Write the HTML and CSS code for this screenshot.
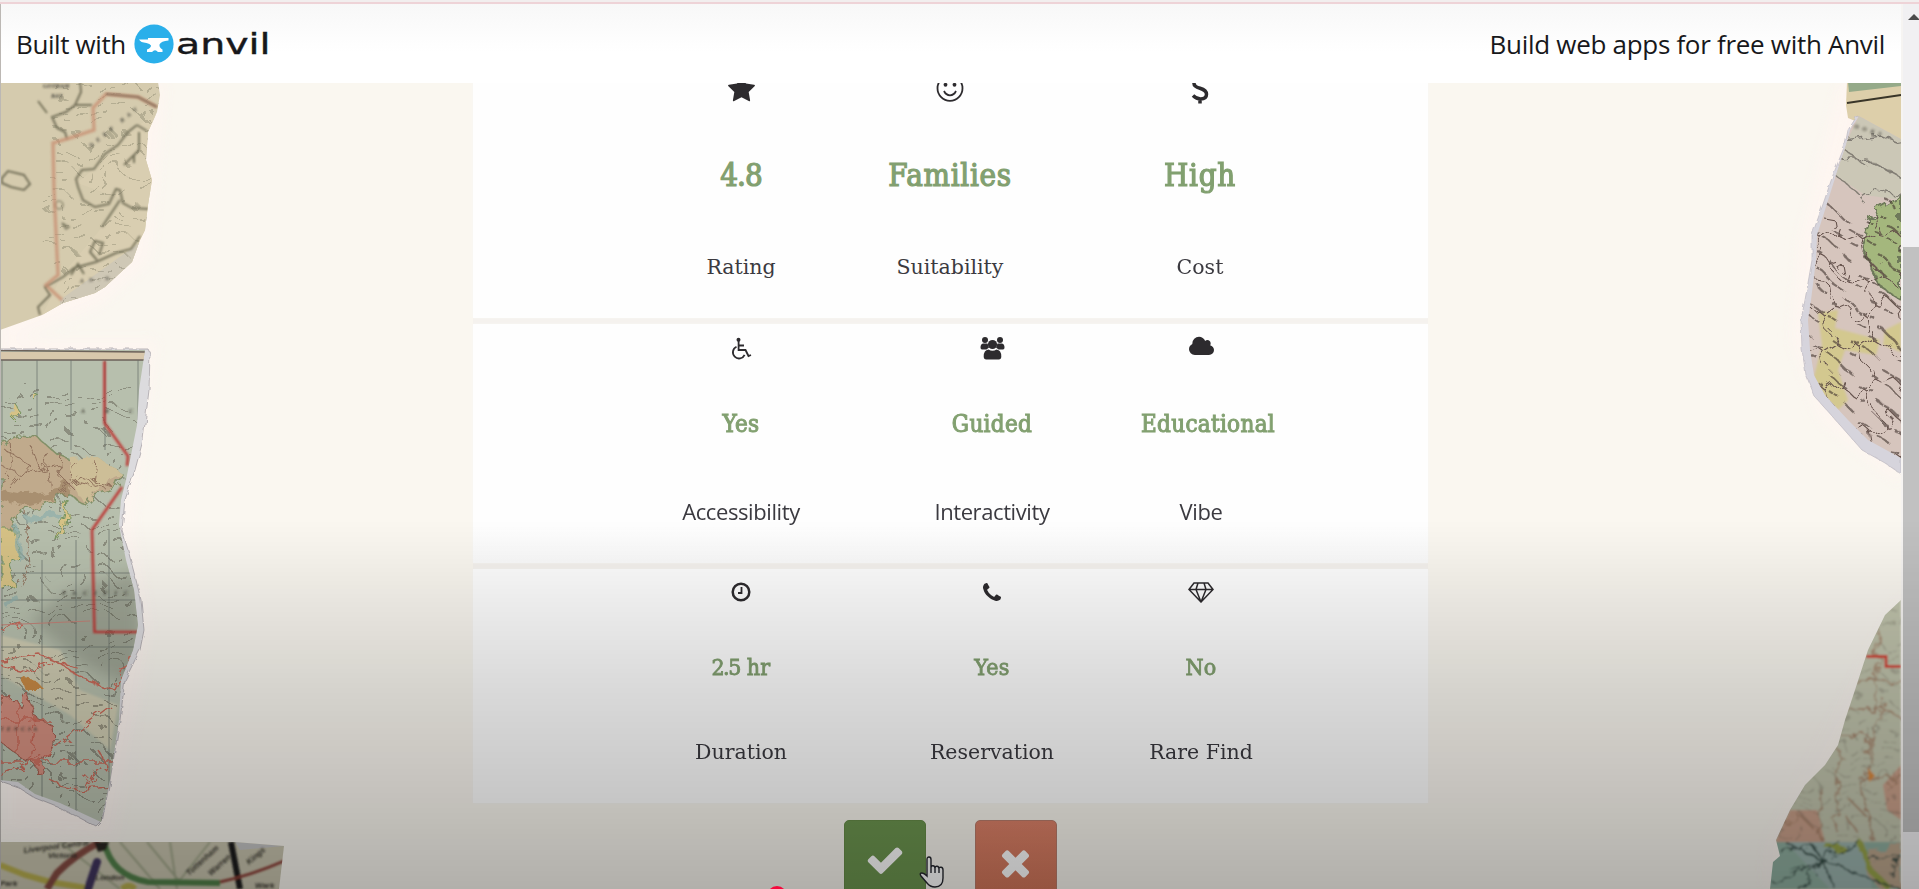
FILE: index.html
```html
<!DOCTYPE html>
<html lang="en">
<head>
<meta charset="utf-8">
<title>Built with Anvil</title>
<link rel="stylesheet" href="styles.css">
</head>
<body>
<div class="shell">
  <div class="page">
    <header class="banner">
      <div class="brand">
        <span class="brand-text">Built with</span>
        <svg class="brand-mark" viewBox="0 0 40 40"><circle cx="20" cy="20" r="19.6" fill="#2aafea"/><path fill="#fff" d="M5 15.500H14V14H34.500V16.500Q27 17 25.500 20.500Q25 23.500 28.500 25.500V28H24Q21 24.500 18 28H13V25.500Q17 24 17 21.500Q16 19.500 12.500 19Q6.500 18.500 5 15.500Z"/></svg>
        <span class="brand-name">anvil</span>
      </div>
      <span class="promo">Build web apps for free with Anvil</span>
    </header>
    <main class="content">
      <svg class="maps" viewBox="0 82 1901 807">
        <defs>
          <filter id="torn" x="-5%" y="-5%" width="110%" height="110%"><feTurbulence type="fractalNoise" baseFrequency=".12" numOctaves="2" seed="4"/><feDisplacementMap in="SourceGraphic" scale="5"/></filter>
          <filter id="wobble" x="-10%" y="-10%" width="120%" height="120%"><feTurbulence type="fractalNoise" baseFrequency=".09" numOctaves="3" seed="9"/><feDisplacementMap in="SourceGraphic" scale="14"/><feGaussianBlur stdDeviation=".6"/></filter>
          <filter id="scatter" x="-10%" y="-10%" width="120%" height="120%"><feTurbulence type="fractalNoise" baseFrequency=".03" numOctaves="2" seed="17"/><feDisplacementMap in="SourceGraphic" scale="60"/><feGaussianBlur stdDeviation=".7"/></filter>
          <filter id="halo"><feGaussianBlur stdDeviation="7"/></filter>
          <filter id="soft"><feGaussianBlur stdDeviation=".8"/></filter>
          <pattern id="labels" width="47" height="31" patternUnits="userSpaceOnUse"><path d="M3 6h17M25 10h12M9 18h8M28 22h15M2 27h11M19 29h5" stroke="#4d4a3c" stroke-width="1.500" stroke-dasharray="5 .8" opacity=".55"/></pattern>
          <pattern id="scrawl" width="41" height="37" patternUnits="userSpaceOnUse"><path d="M2 5l17 10M26 5l10 7M7 22l10 6M26 22l12 8" stroke="#40332e" stroke-width="2.200" stroke-dasharray="6 1" opacity=".6"/><path d="M0 17l12-5 9 8 3 17M21 20l12-8 8 5M33 12l-4-12" fill="none" stroke="#65524c" stroke-width="1.100"/></pattern>
          <clipPath id="clipA"><path d="M0 82H158L160 95 157 112 148 132 146 160 152 180 148 205 145 230 140 240 132 262 120 273 105 287 95 293 63 303 42 315 0 330Z"/></clipPath>
          <clipPath id="clipB"><path d="M0 350H145L139 390 137 425 130 460 126 480 121 500 119 525 126 560 134 590 138 625 133 650 121 680 119 720 110 780 101 822 60 803 35 794 18 782 0 780Z"/></clipPath>
          <clipPath id="clipC"><path d="M0 842H235L284 846 279 889H0Z"/></clipPath>
          <clipPath id="clipD"><path d="M1859 116 1850 130 1846 145 1836 175 1825 210 1817 235 1816 260 1811 300 1808 320 1810 350 1814 375 1825 395 1848 420 1868 440 1888 451 1901 458V139Z"/></clipPath>
          <clipPath id="clipE"><path d="M1901 600 1885 615 1868 650 1855 690 1845 720 1838 745 1825 765 1805 785 1790 810 1776 840 1780 856 1773 862 1770 889H1901Z"/></clipPath>
        </defs>

        <g fill="#fff5f1" filter="url(#halo)" opacity=".75">
          <path d="M0 82H165L150 260 100 305 0 345Z"/>
          <path d="M0 340H158L132 520 150 630 115 840 0 835Z"/>
          <path d="M1901 82H1840L1800 240 1792 340 1820 420 1901 485Z"/>
          <path d="M1901 590 1840 700 1765 842 1762 889H1901Z" opacity=".5"/>
        </g>

        <g clip-path="url(#clipA)">
          <rect y="82" width="165" height="250" fill="#d5cbae"/>
          <path d="M77 183L95 168 137 126 165 110V290L40 320 62 275 125 200Z" fill="#d9ceb1"/>
          <path d="M60 300L150 235 146 300 60 320Z" fill="#cfc8b6"/>
          <g filter="url(#scatter)"><rect x="55" y="82" width="130" height="230" fill="url(#labels)" opacity=".6"/></g>
          <g fill="none" stroke="#77735c" stroke-width="2" filter="url(#soft)">
            <path d="M80 80l1 12-6 13-9 7-14 5 5 11 8 4 2 7M75 105H92"/>
            <path d="M137 125l-9 7-10 13-13 9-11 15-12 1-6 9 2 8 5 13 12 7 14-3 7-15 4 1 3 13 9 5 17 1M137 125l10 6M139 132V150L124 165M134 155V163"/>
            <path d="M2 178l6-7 8 2 8 2 6 9-6 6-13-3-9-4zM95 235M140 236l-9 13-15 4-20 9-22 6-11 9-18 10 5 8-12 12 2 8M97 260l-7-8 5-11 8 2-4 12M71 275l7-11 6 10M38 101l9 12M120 200l-8 12-10 15"/>
            <path d="M62 223l7 4-3 2z" stroke-width="1.400"/><circle cx="59" cy="205" r="4" stroke-width="1.200"/>
          </g>
          <path d="M157 107L138 97 106 94 93 108 94 130 70 138 53 143 54 190 58 275 46 285 62 300" fill="none" stroke="#c88f72" stroke-width="3.500" opacity=".75" filter="url(#soft)"/>
          <path d="M106 94L138 97 157 107" fill="none" stroke="#8b7460" stroke-width="2" filter="url(#soft)"/>
          <text class="map-text" transform="translate(91 148) rotate(-39)" letter-spacing="4.500">DEEP BAY</text>
          <text class="map-text" x="43" y="88">GOTHAM</text><text class="map-text" x="51" y="98">BAY</text>
          <text class="map-text" transform="translate(80 283) rotate(-5)" letter-spacing="5">AN-N</text>
        </g>

        <path d="M0 349H148L150 353 149 390 143 440 135 470 125 500 122 530 128 550 136 580 141 600 144 630 140 650 125 680 120 720 110 780 102 822 97 827 80 818 60 808 35 798 18 787 0 781Z" fill="#dcdbde" stroke="#a9a5aa" stroke-width=".8" filter="url(#torn)"/>
        <g clip-path="url(#clipB)">
          <rect y="350" width="150" height="480" fill="#b7bfad"/>
          <path d="M0 352H145V360H0Z" fill="#d8c8ac"/><path d="M0 350.500L145 352M0 360H145" stroke="#6c625a" stroke-width="1.500"/>
          <path d="M30 620L70 590 140 570V690L85 665Z" fill="#9ea494" filter="url(#halo)"/>
          <path d="M0 635L60 650 80 690 118 705 110 750 70 715 0 675Z" fill="#cfccb2" filter="url(#soft)"/>
          <g filter="url(#scatter)"><rect x="-20" y="385" width="200" height="440" fill="url(#labels)"/></g>
          <g stroke="#67716a" stroke-width="1" opacity=".7"><path d="M2 360V830M37 360V445M71 360V450M105 360V450M42 560V800M76 540V830M109 530V830M0 573H137M0 600H137M0 647H137M138 360V420" fill="none"/></g>
          <g filter="url(#wobble)">
            <path d="M0 445L20 436 38 438 58 455 75 462 96 458 123 475 118 487 95 495 85 505 67 493 45 505 20 510 8 535 0 540Z" fill="#c0aa8c" stroke="#829068" stroke-width="1.500"/>
            <path d="M0 495L25 500 60 492 70 485" fill="none" stroke="#907454" stroke-width="9" opacity=".5"/>
            <path d="M70 458L95 456 123 474 100 486 85 504 70 480Z" fill="#cdbe97"/>
            <path d="M0 530L18 530 20 555 8 560 15 585 0 590ZM63 510L68 500 66 525 56 540ZM12 400L20 412 13 420M34 393L39 396 34 400" fill="#d6c286" stroke="#74925f" stroke-width="1"/>
            <path d="M4 449L30 465 10 488M30 445L40 470 60 465 62 480M45 450L50 490M0 465L20 475 45 465M75 462L70 480 90 485M95 460L92 480 112 486M60 492L80 478 104 487M10 440L12 470 0 480M25 510L30 565 20 585M62 455L60 475 75 490M0 700L15 698 20 707 27 692 35 717 52 725 53 745 44 762 40 777 33 762 20 757 0 741Z" fill="none" stroke="#8f705b"/>
            <path d="M0 700L15 698 20 707 27 692 35 717 52 725 53 745 44 762 40 777 33 762 20 757 0 741Z" fill="#d49080" stroke="#a65e50"/>
            <path d="M20 677L35 680 44 689 24 689Z" fill="#c98a45"/>
            <path d="M20 622L0 630M0 665L30 672 55 660 85 680 115 690M0 777L45 755 110 706M46 776L70 790 111 787M98 750L107 766 85 787 93 770M0 762L120 762M0 720H50M17 700V755M35 717L30 760M0 660L40 655 80 670M130 655L115 690" fill="none" stroke="#c96858" stroke-width="1.400"/>
            <path d="M25 520L60 515M14 525L22 560M5 605L20 600" stroke="#8faeaa" stroke-width="6" opacity=".7"/>
          </g>
          <g fill="none" stroke="#bc3b37" stroke-width="2.600" filter="url(#soft)"><path d="M104.500 361V423L128 456 127 466"/><path d="M122 487L92 530 94.500 632H138"/></g>
          <path d="M0 625L90 621" stroke="#c28378"/>
          <text class="map-text" x="81" y="413" letter-spacing="20">ARC</text>
          <text class="map-text" x="62" y="595" letter-spacing="7">PACIFIC</text>
          <text class="map-text" x="0" y="731" letter-spacing="3">TENCIA</text>
        </g>

        <g clip-path="url(#clipC)">
          <rect y="842" width="290" height="50" fill="#c8c4ae"/>
          <path d="M235 842L284 846 240 850Z" fill="#c5c4c4"/>
          <g stroke="#9fa488" stroke-width="2" fill="none" filter="url(#soft)"><path d="M120 842L160 889M147 842L180 882M170 842L177 889M210 842L180 880M60 842L120 889"/></g>
          <g filter="url(#soft)">
          <path d="M0 865L25 875 50 882 92 889M122 889q7-6 13 0" fill="none" stroke="#b7ad4f" stroke-width="6"/>
          <path d="M100 842Q75 855 57 873L47 889" fill="none" stroke="#844b42" stroke-width="7"/>
          <path d="M97 862L88 889" stroke="#40355d" stroke-width="8" stroke-linecap="round"/>
          <path d="M104 842Q112 876 148 882L220 883" fill="none" stroke="#51804a" stroke-width="6"/>
          <path d="M94 842H109L106 850 98 852Z" fill="#292720"/>
          <path d="M231 842L240 889" stroke="#1d1d1d" stroke-width="6"/>
          <path d="M220 882Q252 875 284 861" fill="none" stroke="#8b3d35" stroke-width="3"/>
          </g>
          <g class="map-heavy"><text transform="translate(24 853) rotate(-7)">Liverpool Central</text><text x="48" y="858">Victoria</text><text x="0" y="886">Park</text><text x="95" y="880">London</text><text transform="translate(189 876) rotate(-42)">Tottenham</text><text transform="translate(211 876) rotate(-42)">Warren</text><text transform="translate(249 865) rotate(-40)">Kings</text><text x="255" y="888">Wark</text></g>
        </g>

        <path d="M1847 82H1901V140L1848 118 1846 105Z" fill="#ddcfaa"/>
        <path d="M1848 82H1901V86L1849 92Z" fill="#95aa89"/><path d="M1847 103L1901 95" stroke="#393528" stroke-width="2"/>
        <path d="M1857 116L1848 130 1845 145 1833 175 1821 210 1812 235 1812 260 1805 300 1801 320 1802 350 1806 375 1815 397 1840 425 1862 450 1885 463 1901 474V140Z" fill="#d6d4dc" stroke="#bbb8c0" stroke-width=".7" filter="url(#torn)"/>
        <g clip-path="url(#clipD)">
          <rect x="1800" y="110" width="101" height="360" fill="#d6c5bd"/>
          <path d="M1859 116L1901 139V200L1865 195 1835 175 1845 145Z" fill="#cbc7b6"/>
          <path d="M1875 210L1901 195V300L1882 288 1860 245Z" fill="#a4b77d" stroke="#6e795a" stroke-width="2" filter="url(#wobble)"/>
          <path d="M1818 313L1838 310 1835 328 1880 340 1876 355 1845 350 1838 370 1848 400 1838 410 1812 385 1822 345ZM1901 322L1885 330 1883 345 1901 352Z" fill="#d3c88f" filter="url(#soft)"/>
          <g filter="url(#scatter)"><rect x="1760" y="205" width="180" height="290" fill="url(#scrawl)"/></g>
          <g filter="url(#wobble)"><path d="M1845 140L1880 135 1905 145M1840 160L1865 158 1905 180M1845 150L1865 165M1835 175L1860 195M1860 200L1875 190 1905 195" fill="none" stroke="#827d74" stroke-width="1.500"/></g>
          <text class="map-text" transform="translate(1854 128) rotate(17)" letter-spacing="4">OOKS</text>
        </g>

        <g clip-path="url(#clipE)" filter="url(#soft)">
          <rect x="1760" y="590" width="141" height="300" fill="#c0c3ac"/>
          <path d="M1775 842L1790 810 1817 810 1825 842ZM1901 765L1883 785 1887 810 1901 820Z" fill="#c9a08a"/>
          <g filter="url(#scatter)"><path d="M1740 580H1930V842H1740Z" fill="url(#labels)" opacity=".55"/></g>
          <g stroke="#a27c62" fill="none" opacity=".75" filter="url(#wobble)"><path d="M1879 610L1875 710M1855 681H1901M1845 709H1885L1901 718M1840 735H1868V770M1885 700L1870 735 1872 765 1862 790 1873 842M1860 780L1901 775M1820 787V842M1845 815L1860 835M1840 750L1835 830M1850 800L1865 815M1785 825L1800 815 1815 830M1888 785L1901 770" stroke-width="1.800"/></g>
          <path d="M1866 656.500H1886V666.500H1901" fill="none" stroke="#d13a2d" stroke-width="2.800"/>
          <path d="M1868 768L1875 776 1869 782Z" fill="#d88a3f"/>
          <path d="M1765 842H1901V889H1765Z" fill="#8fae9f"/>
          <path d="M1785 842H1865L1872 889H1830Z" fill="#9bb3ad"/>
          <g filter="url(#wobble)"><path d="M1870 850L1901 842V889H1880L1865 872Z" fill="#bba58c"/><path d="M1860 842L1870 870 1890 889M1825 845L1845 850" stroke="#98a44c" stroke-width="6" fill="none"/><path d="M1779 851L1815 845M1790 870L1822 860 1798 889M1822 860L1835 889M1822 860L1860 842M1822 860L1900 889M1822 860L1785 842M1810 842L1822 860 1775 885M1870 860L1900 855 1890 875M1840 842L1810 875" fill="none" stroke="#2f4641" stroke-width="1.600"/></g>
        </g>
      </svg>

      <div class="card">
        <section class="row row-top">
          <div class="stat"><span class="stat-icon"><svg width="29" height="29" viewBox="0 0 1792 1792"><path d="M1728 647q0 22-26 48l-363 354 86 500q1 7 1 20 0 21-10.500 35.500t-30.500 14.500q-19 0-40-12l-449-236-449 236q-22 12-40 12-21 0-31.500-14.500t-10.500-35.500q0-6 2-20l86-500-364-354q-25-27-25-48 0-37 56-46l502-73 225-455q19-41 49-41t49 41l225 455 502 73q56 9 56 46z"/></svg></span><span class="stat-value tight">4.8</span><span class="stat-label">Rating</span></div>
          <div class="stat"><span class="stat-icon"><svg width="30" height="30" viewBox="0 0 30 30"><circle cx="15" cy="14.300" r="12.500" class="line"/><circle cx="10.500" cy="10.800" r="1.900"/><circle cx="19.500" cy="10.800" r="1.900"/><path class="line" d="M9 17q2 4.300 6 4.300t6-4.300"/></svg></span><span class="stat-value">Families</span><span class="stat-label">Suitability</span></div>
          <div class="stat"><span class="stat-icon"><svg width="20" height="30" viewBox="0 0 20 30"><path d="M16 7.500Q13 5 9.500 5 4 5 4 9.500 4 12.500 10 14.300 16.500 16.300 16.500 20.300 16.500 25 10.500 25 6.500 25 3 21.500M10 0V5M10 25V29.500" fill="none" stroke="#2d2b2e" stroke-width="3.500"/></svg></span><span class="stat-value">High</span><span class="stat-label">Cost</span></div>
        </section>
        <section class="row row-middle">
          <div class="stat"><span class="stat-icon"><svg width="22" height="23" viewBox="0 0 22 23"><circle cx="8.500" cy="2.800" r="2"/><path class="line" d="M8.600 4V13H15.500L18.500 19 21 18M9 8.500H14M6.500 9.800A6.100 6.100 0 1 0 14.600 17.800"/></svg></span><span class="stat-value">Yes</span><span class="stat-label">Accessibility</span></div>
          <div class="stat"><span class="stat-icon"><svg width="25" height="24" viewBox="0 0 25 24"><circle cx="5" cy="4" r="3"/><circle cx="20" cy="4" r="3"/><path d="M3 7.500h4.500l1.500 4-2.500 2H2Q.5 13.500.5 11.500.5 8 3 7.500ZM22 7.500h-4.500l-1.500 4 2.500 2H23q1.500 0 1.500-2Q24.500 8 22 7.500Z"/><circle cx="12.500" cy="8.500" r="4.600"/><path d="M8.500 13.500q4 2.600 8 0 4.800.5 4.800 7 0 3-2.600 3H6.300q-2.600 0-2.600-3 0-6.500 4.800-7Z"/></svg></span><span class="stat-value">Guided</span><span class="stat-label">Interactivity</span></div>
          <div class="stat"><span class="stat-icon"><svg width="25" height="24" viewBox="64 96 1920 1792"><path d="M1984 1152q0 159-112.500 271.500t-271.500 112.500h-1088q-185 0-316.500-131.500t-131.500-316.500q0-132 71-241.500t187-163.500q-2-28-2-43 0-212 150-362t362-150q158 0 286.500 88t187.500 230q70-62 166-62 106 0 181 75t75 181q0 75-41 138 129 30 213 134.500t84 239.500z"/></svg></span><span class="stat-value stat-value-long">Educational</span><span class="stat-label">Vibe</span></div>
        </section>
        <section class="row row-bottom">
          <div class="stat"><span class="stat-icon"><svg width="20" height="20" viewBox="0 0 20 20"><circle cx="10" cy="10" r="8.300" fill="none" stroke="#2d2b2e" stroke-width="2.500"/><path class="line" d="M10.500 5V11H7"/></svg></span><span class="stat-value"><span class="tight">2.5</span> hr</span><span class="stat-label">Duration</span></div>
          <div class="stat"><span class="stat-icon"><svg width="18" height="18" viewBox="192 128 1408 1408"><path d="M1600 1240q0 27-10 70.500t-21 68.500q-21 50-122 106-94 51-186 51-27 0-52.500-3.500t-57.500-12.500-47.500-14.500-55.500-20.500-49-18q-98-35-175-83-128-79-264.500-215.500t-215.500-264.500q-48-77-83-175-3-9-18-49t-20.500-55.500-14.500-47.500-12.500-57.500-3.500-52.500q0-92 51-186 56-101 106-122 25-11 68.500-21t70.500-10q14 0 21 3 18 6 53 76 11 19 30 54t35 63.500 31 53.500q3 4 17.500 25t21.500 35.500 7 28.500q0 20-28.500 50t-62 55-62 53-28.500 46q0 9 5 22.500t8.500 20.500 14 24 11.500 19q76 137 174 235t235 174q2 1 19 11.500t24 14 20.500 8.500 22.500 5q18 0 46-28.500t53-62 55-62 50-28.500q14 0 28.500 7t35.500 21.500 25 17.500q25 15 53.500 31t63.500 35 54 30q70 35 76 53 3 7 3 21z"/></svg></span><span class="stat-value">Yes</span><span class="stat-label">Reservation</span></div>
          <div class="stat"><span class="stat-icon"><svg width="26" height="21" viewBox="0 0 26 21"><path class="gem" d="M6 1H20L25 7.500 13 20 1 7.500ZM1 7.500H25M10 1L8 7.500 13 20 18 7.500 16 1"/></svg></span><span class="stat-value">No</span><span class="stat-label">Rare Find</span></div>
        </section>
      </div>

      <div class="actions">
        <button class="btn btn-accept" aria-label="Accept"><svg width="40" height="40" viewBox="0 0 1792 1792"><path d="M1671 566q0 40-28 68l-724 724-136 136q-28 28-68 28t-68-28l-136-136-362-362q-28-28-28-68t28-68l136-136q28-28 68-28t68 28l294 295 656-657q28-28 68-28t68 28l136 136q28 28 28 68z"/></svg></button>
        <button class="btn btn-reject" aria-label="Reject"><svg width="41" height="41" viewBox="0 0 1792 1792"><path d="M1490 1322q0 40-28 68l-136 136q-28 28-68 28t-68-28l-294-294-294 294q-28 28-68 28t-68-28l-136-136q-28-28-28-68t28-68l294-294-294-294q-28-28-28-68t28-68l136-136q28-28 68-28t68 28l294 294 294-294q28-28 68-28t68 28l136 136q28 28 28 68t-28 68l-294 294 294 294q28 28 28 68z"/></svg></button>
      </div>
    </main>
  </div>
  <div class="scrollbar"><i class="scroll-arrow"></i><div class="scroll-thumb"></div></div>
</div>
<svg class="cursor" width="28" height="33" viewBox="0 0 28 33"><path d="M9 20V3.500Q9 1 11 1t2 2.500V12Q13 9.500 15 9.700T17 12.500Q17 10 19 10.300T21 13Q21 11 23 11.300T25 14V22Q25 31 17 31 12 31 9 27L3 20Q1 17 4 17 6 17 9 20ZM13 11V17M17 12V17M21 13V17" fill="#fff" stroke="#25272e" stroke-width="1.400"/></svg>
<div class="shade"></div>
<div class="playhead"></div>
</body>
</html>
```
FILE: styles.css
```css
* { box-sizing: border-box; }
body { margin: 0; height: 889px; overflow: hidden; position: relative; background: #faf7f0; font-family: "Open Sans", sans-serif; }
.shell { display: flex; height: 889px; }
.page { flex: 1; display: flex; flex-direction: column; border-left: 1px solid #bcb8b4; min-width: 0; }
.banner { position: relative; height: 83px; flex: none; display: flex; align-items: center; justify-content: space-between; padding: 4px 16px 0 15px; background: linear-gradient(#f7f7f7, #fff 52px); z-index: 2; color: #17181b; font-size: 26px; }
.brand { display: flex; align-items: center; }
.brand-text { letter-spacing: -.4px; }
.brand-mark { width: 40px; height: 40px; margin-left: 8px; }
.brand-name { font-family: "DejaVu Sans", sans-serif; font-size: 29px; line-height: 40px; transform: scaleX(1.36); transform-origin: left; margin-left: 2px; -webkit-text-stroke: .4px #17181b; }
.promo { letter-spacing: -.3px; }
.content { position: relative; flex: 1; overflow: hidden; display: flex; flex-direction: column; align-items: center; }
.maps { position: absolute; left: -1px; top: -1px; width: 1901px; height: 807px; }
.map-text { font: italic bold 6px "Liberation Serif", serif; fill: #44423a; filter: url(#soft); }
.map-heavy { font: italic bold 8px "Liberation Sans", sans-serif; fill: #35332b; filter: url(#soft); }

.card { position: relative; width: 955px; margin: -21px 2px 0 0; flex: none; background: #f5f2ee; display: flex; flex-direction: column; gap: 6px; }
.row { display: flex; background: #fefefe; padding-left: 185px; box-shadow: 0 0 2px #f9f7f5; }
.stat { width: 167px; display: grid; grid-template-columns: 167px; justify-items: center; align-items: center; align-content: start; white-space: nowrap; color: #3b3a40; font-family: "DejaVu Serif", serif; font-size: 20.5px; }
.stat:nth-child(2) { margin: 0 42px 0 84px; }
.stat-icon { display: flex; }
.stat-icon svg { fill: #2d2b2e; }
.stat-icon .line { fill: none; stroke: #2d2b2e; stroke-width: 1.8; }
.stat-icon .gem { fill: none; stroke: #2d2b2e; stroke-width: 1.5; }
.stat-value { font-family: "DejaVu Serif Condensed", "DejaVu Serif", serif; font-stretch: condensed; color: #82a070; -webkit-text-stroke: 1.2px #82a070; letter-spacing: .3px; }
.stat-value.tight, .tight { letter-spacing: -1.5px; }
.row-top { height: 256px; }
.row-top .stat { grid-template-rows: 51px 124px 59px; }
.row-top .stat-icon { padding-top: 3px; }
.row-top .stat:nth-child(2) { margin: 0 83px 0 42px; }
.row-top .stat-value { font-size: 31px; letter-spacing: .7px; }
.row-top .stat-value.tight { letter-spacing: -1px; }
.row-middle { height: 239px; background: linear-gradient(#fefefe 85%, #fbfbfb); }
.row-middle .stat { grid-template-rows: 48px 103px 71px; }
.row-middle .stat-value { font-size: 24px; -webkit-text-stroke-width: 1px; }
.row-middle .stat-value-long { margin-left: 14px; }
.row-middle .stat-label { font-family: "Open Sans", sans-serif; font-size: 22px; letter-spacing: -.4px; }
.row-bottom { height: 234px; }
.row-bottom .stat { grid-template-rows: 46px 103px 68px; }
.row-bottom .stat-value { font-size: 23px; -webkit-text-stroke-width: .8px; }

.actions { position: relative; display: flex; gap: 49px; padding-top: 17px; margin-right: 2px; }
.btn { width: 82px; height: 80px; padding: 0; border: 1px solid; border-radius: 5px; display: grid; place-items: center; }
.btn svg { fill: #fff; }
.btn-accept { background: #6c954f; border-color: #668c48; }
.btn-reject { background: linear-gradient(#dc8168, #cf7457); border-color: #b97c6b; }
.btn-reject svg { margin-top: 4px; }

.scrollbar { width: 18px; background: #f1f0f2; border-left: 2px solid #f6f4f2; padding-top: 14px; display: flex; flex-direction: column; }
.scroll-arrow { width: 0; height: 0; margin-left: 5px; border: 6px solid transparent; border-top: 0; border-bottom-color: #4b4b4b; }
.scroll-thumb { margin-top: 227px; height: 585px; background: #c1c1c1; }
.cursor { position: absolute; left: 918px; top: 856px; }
.shade { position: absolute; inset: 0; pointer-events: none; z-index: 3; background: linear-gradient(#f2eeee 0 2px, #eed3d7 2px 4px, transparent 4px 520px, rgba(0,0,0,.015) 540px, rgba(0,0,0,.07) 600px, rgba(0,0,0,.145) 690px, rgba(0,0,0,.21) 790px, rgba(0,0,0,.285) 889px); }
.playhead { position: absolute; z-index: 4; left: 767px; top: 886px; width: 20px; height: 20px; border-radius: 50%; background: #f5083c; }
```
